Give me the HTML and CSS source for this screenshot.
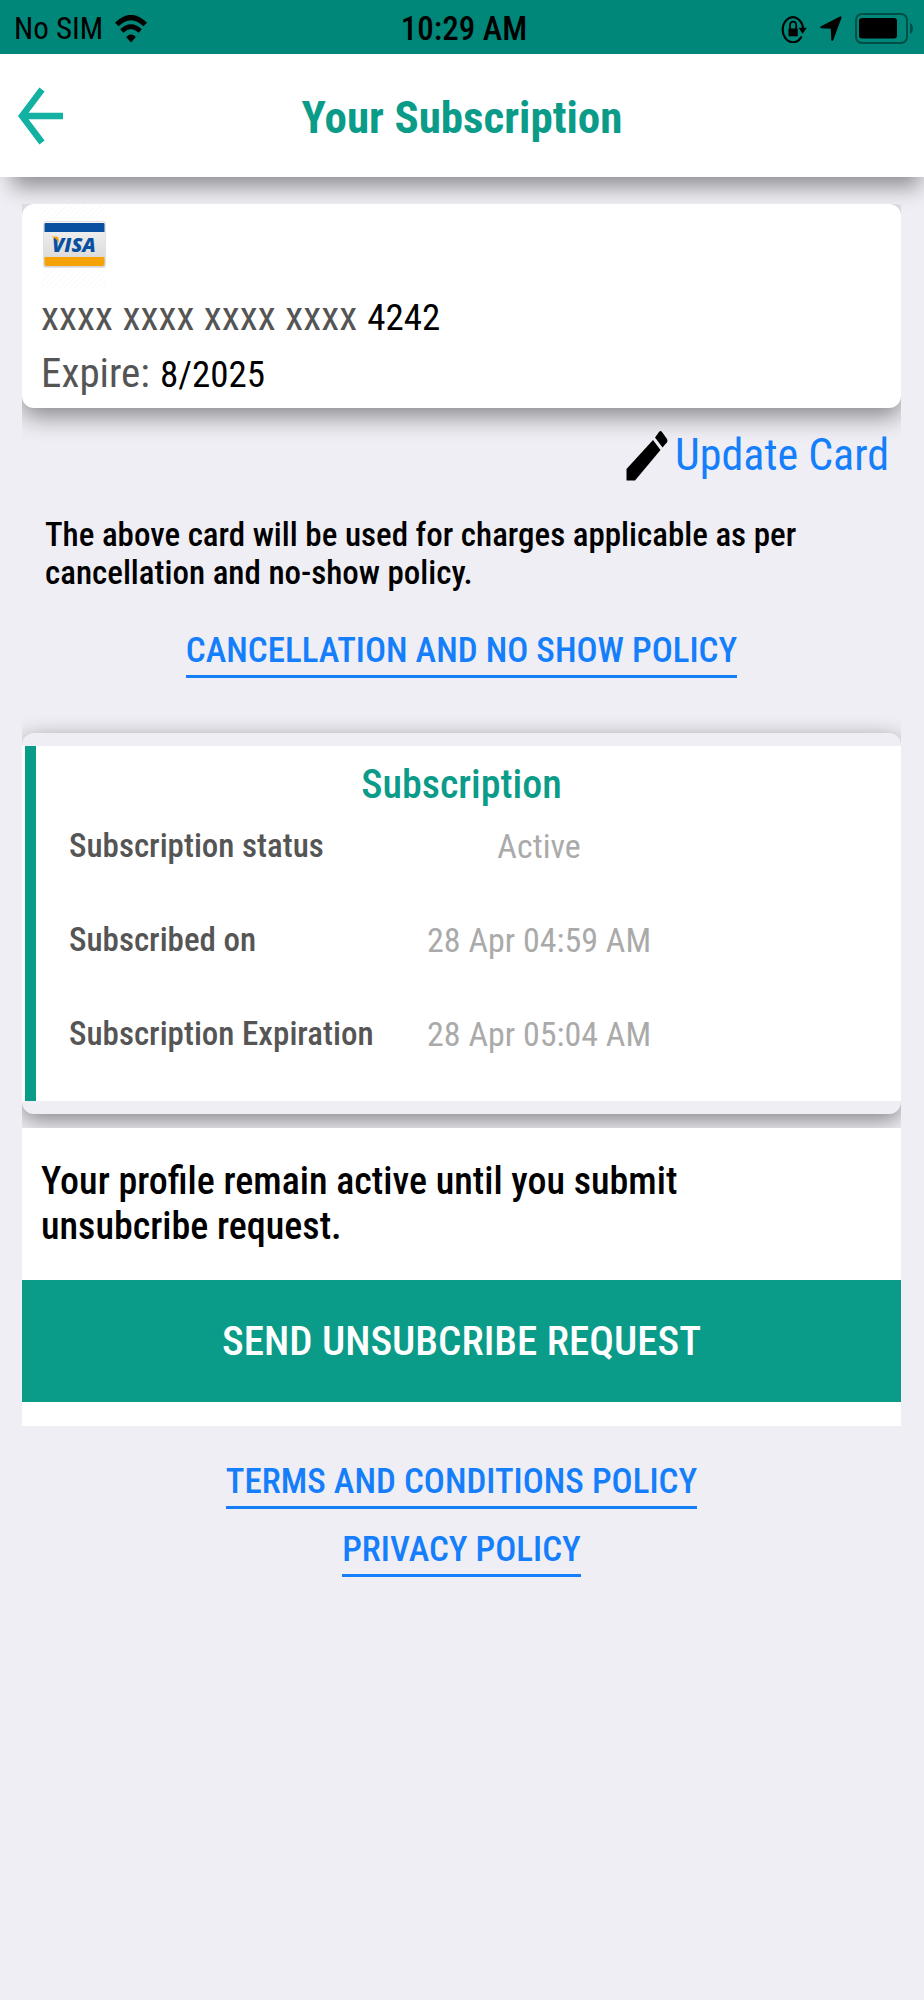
FILE: index.html
```
<!DOCTYPE html>
<html lang="en">
<head>
<meta charset="utf-8">
<meta name="viewport" content="width=device-width, initial-scale=1">
<title>Your Subscription</title>
<link rel="stylesheet" href="styles.css">
</head>
<body>
<div class="status">
  <div class="status-left">
    <span class="carrier">No SIM</span>
    <svg class="wifi" width="32" height="28" viewBox="0 0 32 28" aria-hidden="true">
      <path d="M16 27.5l-4.800-5.600Q16 17 20.800 21.900z"/>
      <path d="M1.800 9.500Q16-4.500 30.200 9.500" fill="none" stroke="#000" stroke-width="5"/>
      <path d="M6.800 16Q16 7.300 25.200 16" fill="none" stroke="#000" stroke-width="4.600"/>
    </svg>
  </div>
  <span class="clock">10:29 AM</span>
  <div class="status-right">
    <svg width="26" height="28" viewBox="0 0 26 28" aria-hidden="true">
      <path d="M20.500 21.500A10.200 12.500 0 1 1 22 13" fill="none" stroke="#000" stroke-width="2.200"/>
      <path d="M17.500 12.800h8.300l-4.200 6z"/>
      <path d="M7.500 13.500h9.200v7.800H7.500z"/>
      <path d="M9 14V10.500q0-3.800 3.100-3.800t3.100 3.800V14" fill="none" stroke="#000" stroke-width="1.800"/>
    </svg>
    <svg width="22" height="26" viewBox="0 0 22 26" aria-hidden="true">
      <path d="M20 .4q1.800-.4 1.400 1.600L13.300 24q-1.500 2.200-2 0l-.5-11.200L1 12.300q-1.700-.7 0-2z"/>
    </svg>
    <svg width="59" height="32" viewBox="0 0 59 32" aria-hidden="true">
      <rect x="1" y="1" width="51" height="29" rx="6" fill="none" stroke="#000" stroke-opacity=".42" stroke-width="2"/>
      <rect x="4" y="5" width="38" height="20.500" rx="3"/>
      <path d="M55 10q3 2 3 5.500T55 21z" fill-opacity=".42"/>
    </svg>
  </div>
</div>

<header class="header">
  <button class="back" type="button" aria-label="Back">
    <svg width="46" height="58" viewBox="0 0 46 58" aria-hidden="true">
      <path d="M24 2.500L4 29l20 26.500M4 29h41" fill="none" stroke="#12b1a2" stroke-width="6.500"/>
    </svg>
  </button>
  <h1 class="title">Your Subscription</h1>
</header>

<main class="column">
  <section class="card">
    <div class="brand">
      <svg width="64" height="47" viewBox="0 0 64 47" role="img" aria-label="Visa">
        <defs>
          <linearGradient id="plate" x1="0" y1="0" x2="0" y2="1"><stop offset="0" stop-color="#f4f4f4"/><stop offset="1" stop-color="#d5d5d7"/></linearGradient>
        </defs>
        <rect x=".5" y=".5" width="62" height="46" rx="2" fill="url(#plate)" stroke="#e2e2e4"/>
        <path d="M1.500 11V3q0-1 1-1h58q1 0 1 1v8z" fill="#0a50a0"/>
        <path d="M1.500 36h60v7q0 2-2 2h-56q-2 0-2-2z" fill="#f5a307"/>
        <text x="9" y="31" class="visa">VISA</text>
        <path d="M8.500 15.500h5q1.700 0 2 2l.8 4.500q-2.500-4.500-7.800-6.500z" fill="#f5a307"/>
      </svg>
    </div>
    <p class="card-line"><span class="muted">xxxx xxxx xxxx xxxx</span> <span class="digits">4242</span></p>
    <p class="card-line"><span class="muted">Expire:</span> <span class="digits">8/2025</span></p>
  </section>

  <a class="update" href="#update">
    <svg width="42" height="51" viewBox="0 0 42 51" aria-hidden="true">
      <path d="M.5 39L27 10l7.500 10L9 50.500H.5z"/>
      <path d="M29 7.500L33 2q1.500-2 3 0l5 7q1 1.800 0 3.200L36.500 17.500z"/>
    </svg>
    <span>Update Card</span>
  </a>

  <p class="note">The above card will be used for charges applicable as per<br>cancellation and no-show policy.</p>

  <a class="link link-cancel" href="#cancellation">CANCELLATION AND NO SHOW POLICY</a>

  <section class="plan">
    <div class="plan-body">
      <h2 class="plan-title">Subscription</h2>
      <dl class="plan-list">
        <div class="plan-row"><dt>Subscription status</dt><dd>Active</dd></div>
        <div class="plan-row"><dt>Subscribed on</dt><dd>28 Apr 04:59 AM</dd></div>
        <div class="plan-row"><dt>Subscription Expiration</dt><dd>28 Apr 05:04 AM</dd></div>
      </dl>
    </div>
  </section>

  <section class="request">
    <p class="request-text">Your profile remain active until you submit<br>unsubcribe request.</p>
    <button class="send" type="button">SEND UNSUBCRIBE REQUEST</button>
  </section>
</main>

<nav class="policies">
  <a class="link" href="#terms">TERMS AND CONDITIONS POLICY</a>
  <a class="link" href="#privacy">PRIVACY POLICY</a>
</nav>
</body>
</html>
```

FILE: styles.css
```
* { box-sizing: border-box; }

body {
  margin: 0;
  background: #efeef4;
  color: #000;
  font-family: "Roboto Condensed", Roboto, sans-serif;
}

h1, h2, p, dl, dd { margin: 0; }
button { font-family: inherit; border: 0; padding: 0; cursor: pointer; }
a { color: #157efb; text-decoration: none; }
svg { display: block; flex: none; }

.status {
  display: grid;
  grid-template-columns: 1fr auto 1fr;
  align-items: center;
  height: 54px;
  padding: 3px 10px 0 14px;
  background: #008779;
}
.status-left, .status-right { display: flex; align-items: center; }
.status-left { gap: 12px; }
.status-right { justify-content: flex-end; gap: 13px; }
.carrier, .clock { line-height: 36px; padding-top: 1px; }
.carrier { font-size: 31px; }
.clock { font-size: 33px; font-weight: 500; }

.header {
  display: grid;
  grid-template-columns: 1fr auto 1fr;
  align-items: center;
  height: 123px;
  padding: 0 18px;
  background: #fff;
  box-shadow: 4px 18px 20px -8px rgba(0, 0, 0, .4);
}
.back { justify-self: start; background: none; }
.title {
  padding-top: 4px;
  font-size: 45px;
  font-weight: 700;
  line-height: 52px;
  color: #0a9b89;
}

.column {
  display: flex;
  flex-direction: column;
  margin: 27px 23px 0 22px;
  overflow: hidden;
}

.card {
  padding: 0 19px 6px;
  border-radius: 12px;
  background: #fff;
  box-shadow: 0 8px 24px rgba(0, 0, 0, .45);
}
.brand {
  width: 66px;
  height: 84px;
  padding: 17px 0 0 2px;
  background: repeating-linear-gradient(135deg, #fff 0 3px, #fafafa 3px 4px);
}
.card-line {
  display: flex;
  align-items: baseline;
  gap: 10px;
  font-size: 41px;
  line-height: 57px;
}
.muted { color: #555; }
.digits { font-size: 37px; line-height: 40px; }

.update {
  display: flex;
  align-items: center;
  align-self: flex-end;
  gap: 7px;
  margin-top: 16px;
  padding-right: 12px;
  font-size: 44px;
  line-height: 62px;
}

.note {
  margin-top: 30px;
  padding-left: 23px;
  font-size: 33px;
  font-weight: 500;
  line-height: 38px;
}

.link {
  align-self: center;
  padding-bottom: 2px;
  border-bottom: 3px solid #157efb;
  font-size: 35px;
  font-weight: 500;
  line-height: 44px;
}
.link-cancel { margin-top: 37px; }

.plan {
  margin-top: 55px;
  padding: 13px 0;
  border-radius: 12px;
  background: #efeef4;
  box-shadow: 0 6px 22px rgba(0, 0, 0, .45);
}
.plan-body {
  position: relative;
  padding: 14px 0 47px;
  background: linear-gradient(90deg, #fff 3px, #0a9b89 3px 14px, #fff 14px);
}
.plan-title {
  font-size: 40px;
  font-weight: 500;
  line-height: 50px;
  text-align: center;
  color: #0a9b89;
}
.plan-list {
  display: grid;
  gap: 54px;
  margin-top: 16px;
  padding-left: 47px;
}
.plan-row {
  display: grid;
  grid-template-columns: 40fr 33fr 27fr;
  font-size: 33px;
  line-height: 40px;
}
.plan-row dt { font-weight: 500; color: #555; white-space: nowrap; }
.plan-row dd { font-size: 34px; text-align: center; color: #aaa; }

.request {
  position: relative;
  display: flex;
  flex-direction: column;
  margin-top: 14px;
  padding: 31px 0 24px;
  background: #fff;
}
.request-text {
  padding: 0 19px;
  font-size: 38px;
  font-weight: 500;
  line-height: 45px;
}
.send {
  height: 122px;
  margin-top: 31px;
  background: #0a9b89;
  color: #fff;
  font-size: 41px;
  font-weight: 500;
}

.policies {
  display: flex;
  flex-direction: column;
  gap: 19px;
  margin: 34px 23px 40px 22px;
}

.visa {
  font: italic 800 20px "Open Sans", sans-serif;
  fill: #0a50a0;
}
```
